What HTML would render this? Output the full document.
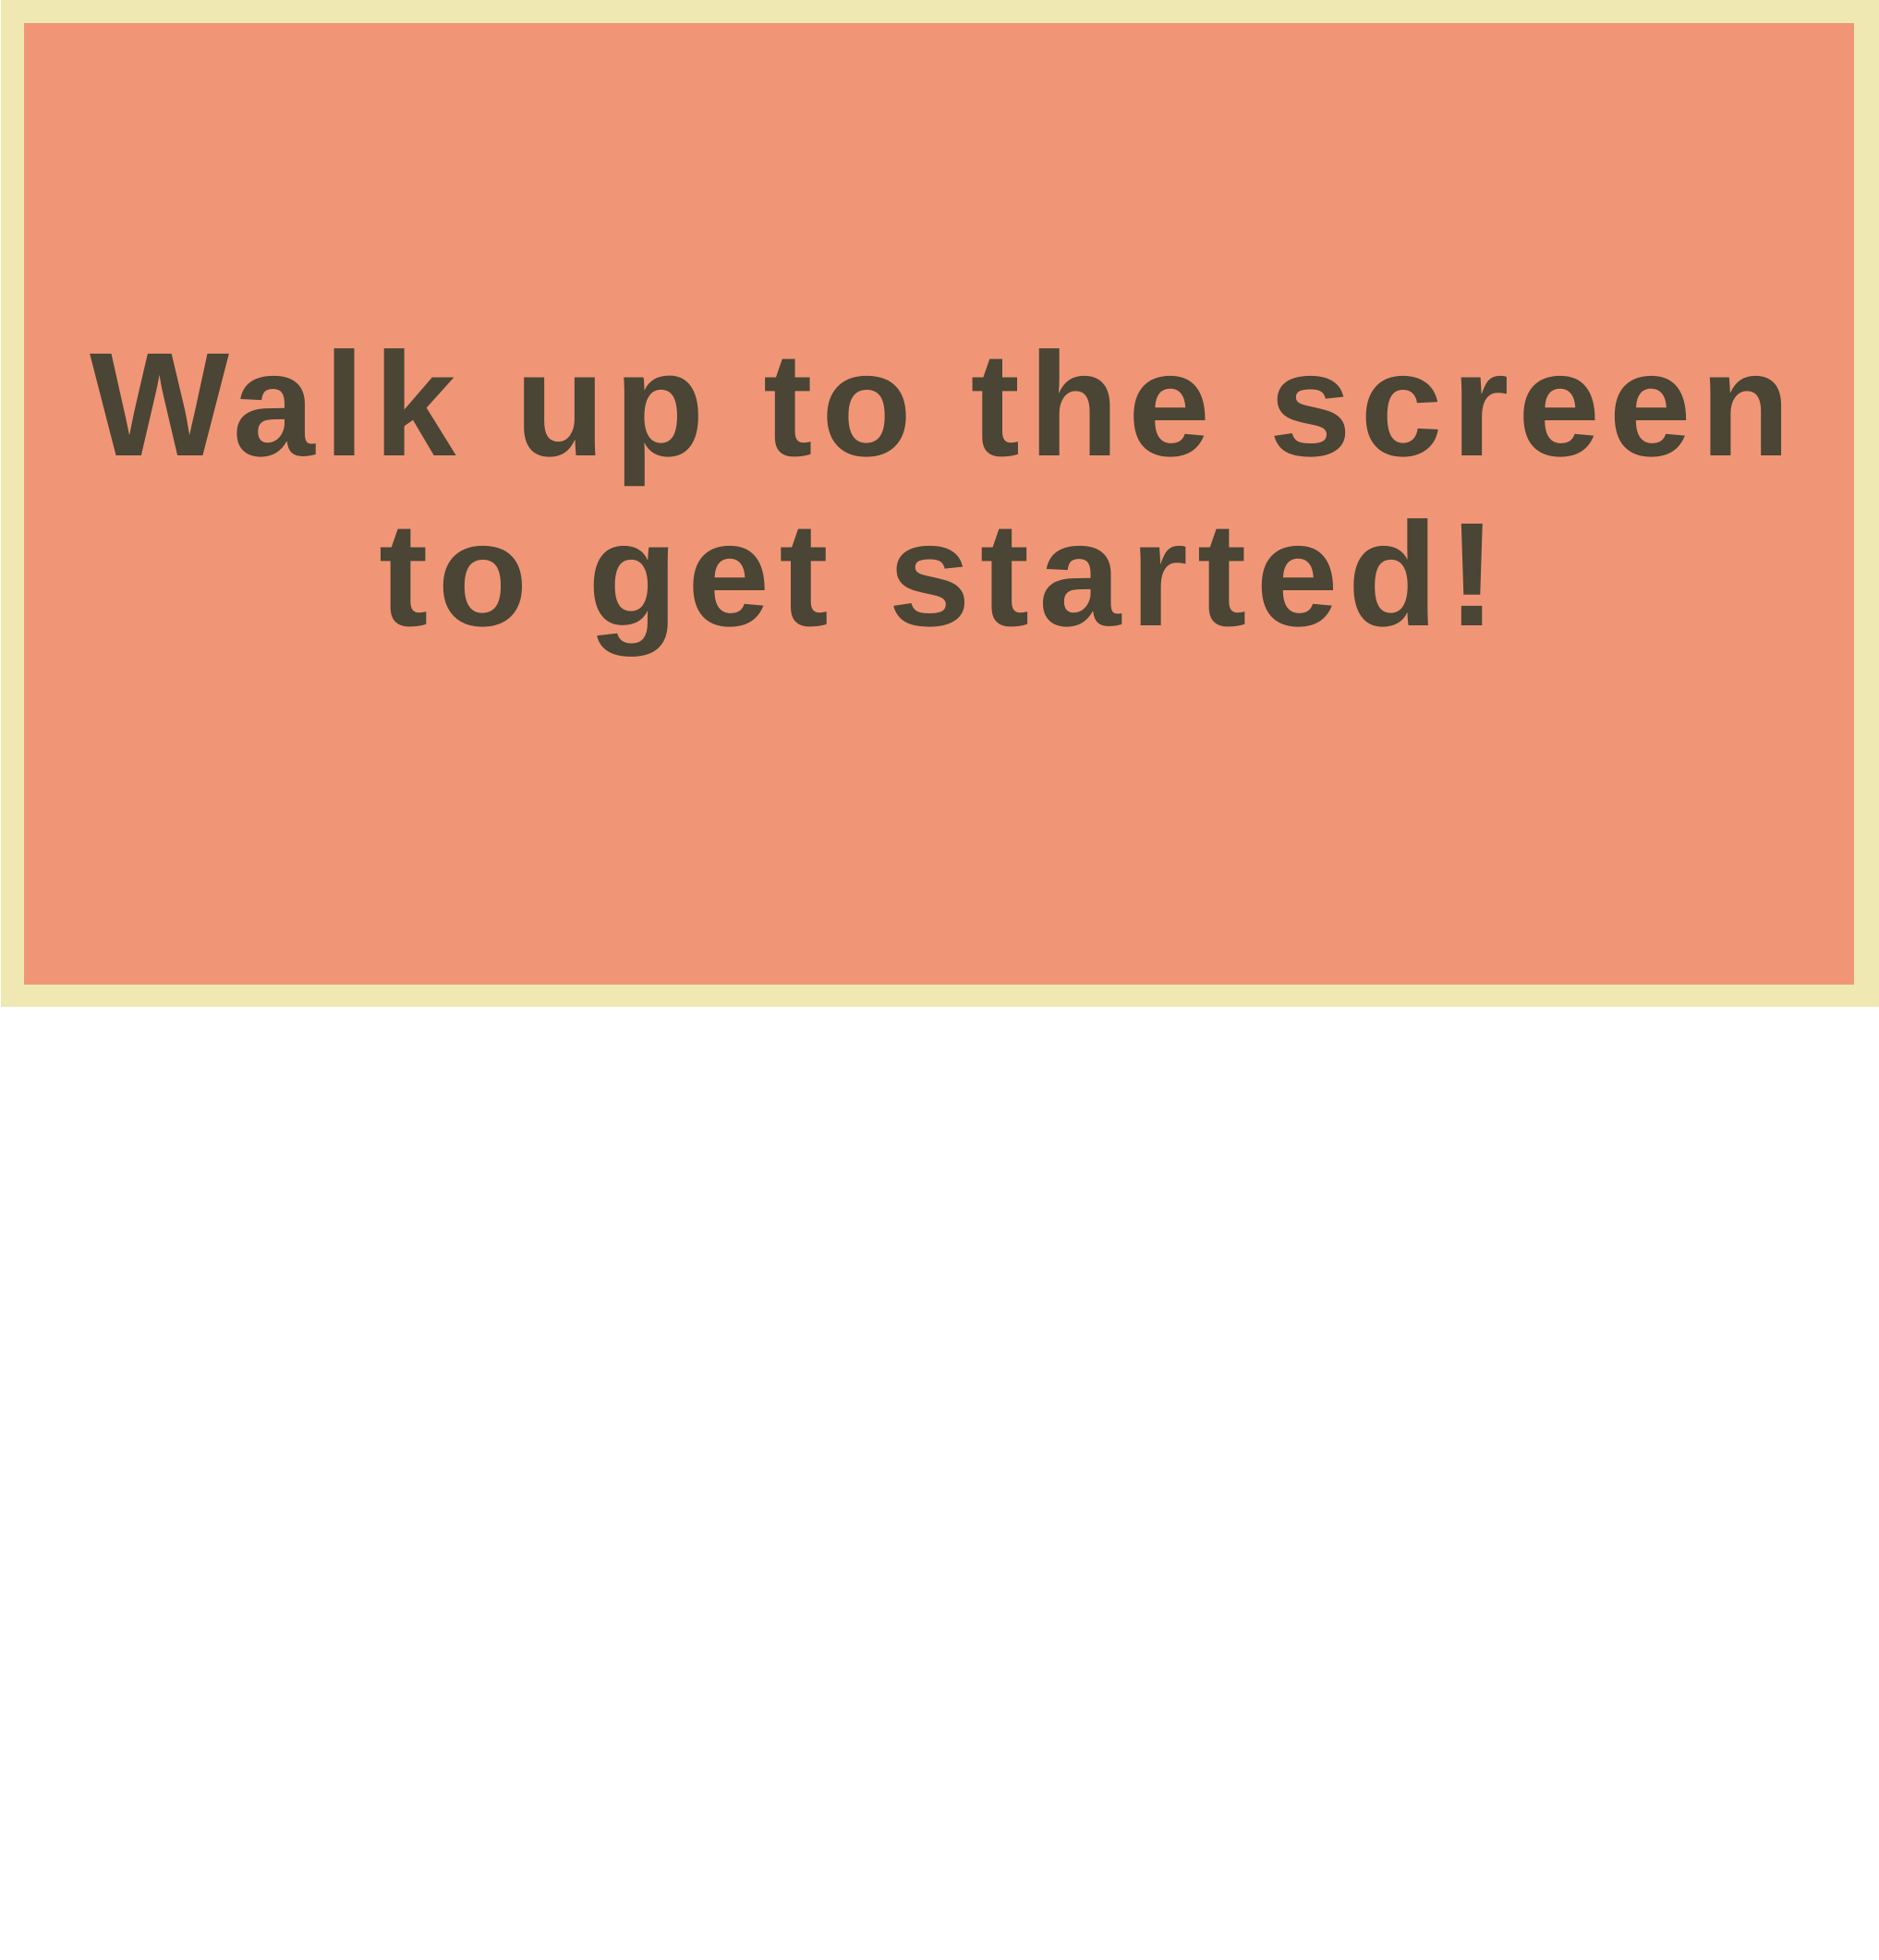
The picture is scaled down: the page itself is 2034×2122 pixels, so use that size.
<!DOCTYPE html>
<html><head><meta charset="utf-8"><style>
html,body{margin:0;padding:0;background:#fff;width:2034px;height:2122px;overflow:hidden}
svg{display:block}
</style></head><body>
<svg width="2034" height="2122" viewBox="0 0 2034 2122" xmlns="http://www.w3.org/2000/svg">
<rect x="1" y="0" width="2033" height="1090" fill="#f0e8b2"/>
<rect x="26" y="25" width="1981" height="1041" fill="#f09677"/>
<g font-family="Liberation Sans, sans-serif" font-weight="bold" font-size="160" fill="#4a4534">
<text x="97" y="493" textLength="1841" lengthAdjust="spacing">Walk up to the screen</text>
<text x="410" y="677" textLength="1210" lengthAdjust="spacing">to get started!</text>
</g>
</svg>
</body></html>
